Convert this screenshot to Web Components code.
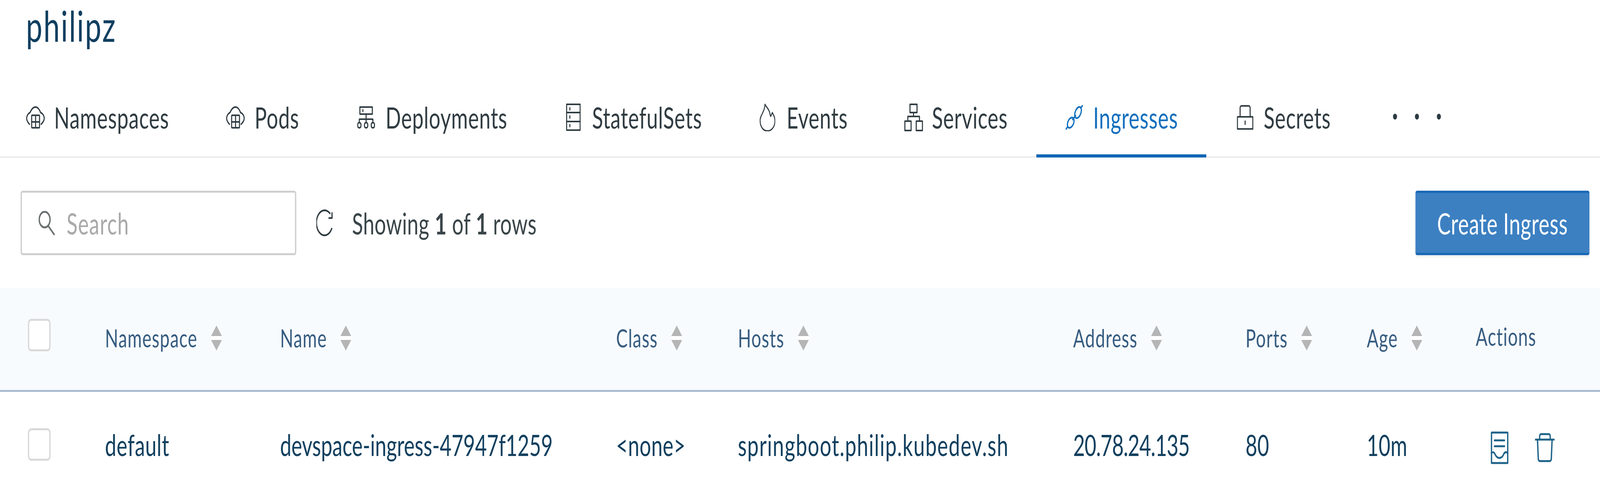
<!DOCTYPE html>
<html lang="en">
<head>
<meta charset="utf-8">
<title>philipz - Ingresses</title>
<style>
  html, body { margin: 0; background: #fff; overflow: hidden; }
  body { height: 1254px; font-family: Lato, "Open Sans", "Liberation Sans", sans-serif; }
</style>
</head>
<body>
<kube-page>
  <page-title slot="title">philipz</page-title>
  <kube-tabs slot="tabs">
    <kube-tab icon="pod" w="739" gap="34">Namespaces</kube-tab>
    <kube-tab icon="pod" w="485" gap="36">Pods</kube-tab>
    <kube-tab icon="deploy" w="772" gap="39">Deployments</kube-tab>
    <kube-tab icon="stateful" w="715" gap="42">StatefulSets</kube-tab>
    <kube-tab icon="flame" w="535" gap="42">Events</kube-tab>
    <kube-tab icon="service" w="596" gap="33">Services</kube-tab>
    <kube-tab icon="link" w="633" gap="38" active>Ingresses</kube-tab>
    <kube-tab icon="lock" w="577" gap="38">Secrets</kube-tab>
    <tab-more></tab-more>
  </kube-tabs>
  <kube-toolbar slot="toolbar"></kube-toolbar>
  <kube-table slot="table"></kube-table>
</kube-page>
<script>
// icon markup with its own viewBox size, traced from the reference
const ICONS = {
  pod: [70, 57, 4, '<path d="M13 46C5 40 1 33 3 28c1-5 6-10 12-12C20 8 27 2 35 2s15 6 19 14c7 2 12 7 13 12 2 5-2 12-11 18"/><rect x="21" y="23" width="29" height="32" rx="2"/><path d="M21 40h29M35.500 23v32"/>'],
  deploy: [66, 57, 4, '<rect x="10" y="2" width="46" height="18"/><path d="M21 9v4M33 20v13M8 42v-9h50v9M33 33v9"/><rect x="2" y="42" width="12" height="13" rx="5"/><rect x="27" y="42" width="12" height="13" rx="5"/><rect x="52" y="42" width="12" height="13" rx="5"/>'],
  stateful: [54, 70, 4, '<rect x="2" y="2" width="50" height="66"/><path d="M2 23h50M2 46h50M14 11v5M14 32v5M14 54v5"/>'],
  flame: [58, 71, 3.500, '<path d="M20 2c4 6 16 13 18 23 1 4 2 6 3 8 2-2 4-6 6-10 6 7 10 14 10 21 0 16-13 26-28 26S2 60 2 43C2 30 20 20 20 2z"/>'],
  service: [69, 71, 4, '<rect x="21" y="2" width="26" height="21"/><path d="M34 23v10M13 45V33h43v12"/><rect x="2" y="45" width="23" height="24"/><rect x="44" y="45" width="23" height="24"/>'],
  link: [64, 63, 4.500, '<ellipse cx="46" cy="19" rx="10" ry="16" transform="rotate(35 46 19)"/><ellipse cx="19" cy="45" rx="10" ry="15" transform="rotate(40 19 45)"/><path d="M63 1l-7 6M1 62l6-6M26 37l11-10"/>'],
  lock: [61, 63, 4, '<rect x="2" y="30" width="57" height="31"/><path d="M12 30V7a5 5 0 0 1 5-5h27a5 5 0 0 1 5 5v23M30.500 41v8"/>'],
  search: [61, 62, 5, '<circle cx="23" cy="22" r="20"/><path d="M36 38l22 22"/>'],
  refresh: [64, 69, 4.500, '<path d="M57 49A30 32 0 1 1 50 10"/><path d="M58 9v13H47"/>'],
  doc: [66, 84, 5, '<rect x="3" y="3" width="60" height="78" rx="1"/><path d="M14 23h37M14 38h37M3 55c6-3 9-2 12 2 5 8 11 11 17 11s13-3 17-11c3-4 7-5 14-2"/>'],
  trash: [74, 75, 5, '<path d="M3 17h68M18 17V8a5 5 0 0 1 5-5h29a5 5 0 0 1 5 5v9M10 17l3 50a6 6 0 0 0 6 5h36a6 6 0 0 0 6-5l3-50"/>']
};

function svgIcon(name) {
  const [w, h, sw, body] = ICONS[name];
  return `<svg xmlns="http://www.w3.org/2000/svg" width="${w}" height="${h}" viewBox="0 0 ${w} ${h}" fill="none" stroke="currentColor" stroke-width="${sw}" stroke-linecap="round" stroke-linejoin="round">${body}</svg>`;
}

class KubePage extends HTMLElement {
  constructor() {
    super();
    this.attachShadow({ mode: "open" }).innerHTML = `
      <style>
        :host { display: block; width: 5913px; height: 1254px; background: #fff; overflow: hidden; color: #12405f; transform-origin: 0 0; }
        .head { height: 196px; padding-left: 96px; box-sizing: border-box; }
      </style>
      <div class="head"><slot name="title"></slot></div>
      <slot name="tabs"></slot>
      <slot name="toolbar"></slot>
      <slot name="table"></slot>`;
  }
  connectedCallback() {
    // the browser window can be narrower than the 5913 design width, so squeeze it to fit
    const k = Math.min(1, window.innerWidth / 5913);
    this.style.transform = `scaleX(${k})`;
  }
}

class PageTitle extends HTMLElement {
  constructor() {
    super();
    this.attachShadow({ mode: "open" }).innerHTML = `
      <style>
        :host { display: block; font-size: 108px; line-height: 130px; letter-spacing: 4px; color: #0f3f60; padding-top: 0; }
      </style><slot></slot>`;
  }
}

class KubeTabs extends HTMLElement {
  constructor() {
    super();
    this.attachShadow({ mode: "open" }).innerHTML = `
      <style>
        :host { display: flex; height: 208px; box-sizing: border-box; border-bottom: 4px solid #ececec; padding-left: 96px; align-items: stretch; }
      </style><slot></slot>`;
  }
}

class KubeTab extends HTMLElement {
  constructor() {
    super();
    const active = this.hasAttribute("active");
    this.attachShadow({ mode: "open" }).innerHTML = `
      <style>
        :host { display: flex; flex: none; width: ${this.getAttribute("w")}px; box-sizing: border-box; position: relative; align-items: center; gap: ${this.getAttribute("gap")}px; color: ${active ? "#1570bd" : "#303c42"}; font-size: 75px; letter-spacing: 1.100px; padding-top: 4px; }
        svg { flex: none; }
        :host([active])::after { content: ""; position: absolute; left: -108px; right: 113px; bottom: -3px; height: 8px; background: #0f66b5; }
      </style>
      ${svgIcon(this.getAttribute("icon"))}<span><slot></slot></span>`;
  }
}

class TabMore extends HTMLElement {
  constructor() {
    super();
    this.attachShadow({ mode: "open" }).innerHTML = `
      <style>
        :host { display: flex; gap: 66px; align-items: center; padding: 0 0 0 0; }
        i { width: 15px; height: 15px; border-radius: 50%; background: #2c3a42; }
      </style><i></i><i></i><i></i>`;
  }
}

class KubeToolbar extends HTMLElement {
  constructor() {
    super();
    this.attachShadow({ mode: "open" }).innerHTML = `
      <style>
        :host { display: flex; align-items: center; height: 333px; box-sizing: border-box; padding: 0 39px 0 76px; }
        .search { width: 1019px; height: 165px; box-sizing: border-box; border: 5px solid #cfcfcf; border-radius: 8px; display: flex; align-items: center; gap: 43px; padding-left: 61px; color: #6a6f70; }
        .search span { color: #a9a9a9; font-size: 75px; letter-spacing: 1.800px; }
        .refresh { margin-left: 74px; color: #2f3b40; display: flex; }
        .status { margin-left: 68px; font-size: 75px; letter-spacing: 0.600px; color: #3a4549; }
        b { font-weight: 700; }
        button { margin-left: auto; width: 643px; height: 165px; background: #3c80c2; color: #fff; border: 0; border-top: 6px solid #1a69b6; border-bottom: 6px solid #1a69b6; border-radius: 6px; box-shadow: 0 6px 4px #f3f3f0; font: inherit; font-size: 75px; letter-spacing: 1px; padding: 0; }
      </style>
      <div class="search">${svgIcon("search")}<span>Search</span></div>
      <div class="refresh">${svgIcon("refresh")}</div>
      <div class="status">Showing <b>1</b> of <b>1</b> rows</div>
      <button>Create Ingress</button>`;
  }
}

class SortArrows extends HTMLElement {
  constructor() {
    super();
    this.attachShadow({ mode: "open" }).innerHTML = `
      <style>
        :host { display: inline-flex; flex-direction: column; margin-left: 50px; }
        i { display: block; width: 0; height: 0; border-left: 20px solid transparent; border-right: 20px solid transparent; }
        .u { border-bottom: 27px solid #b5b5b5; }
        .d { border-top: 27px solid #b5b5b5; }
        .m { height: 10px; background: #fff; }
      </style><i class="u"></i><div class="m"></div><i class="d"></i>`;
  }
}

class KubeTable extends HTMLElement {
  constructor() {
    super();
    const cols = "313px 647px 1242px 450px 1239px 637px 448px 403px 1fr";
    const head = [["Namespace", 1], ["Name", 1], ["Class", 1], ["Hosts", 1], ["Address", 1], ["Ports", 1], ["Age", 1], ["Actions", 0]];
    // letter spacing is per cell: the font is not the reference's, so the widths need nudging
    const cells = [["default", 1], ["devspace-ingress-47947f1259", 0], ["<none>", 0.6], ["springboot.philip.kubedev.sh", 2.200], ["20.78.24.135", -1.200], ["80", 0], ["10m", 0.400]];
    const esc = s => s.replace(/</g, "&lt;").replace(/>/g, "&gt;");
    this.attachShadow({ mode: "open" }).innerHTML = `
      <style>
        :host { display: block; }
        .row { display: grid; grid-template-columns: ${cols}; align-items: center; padding-left: 75px; box-sizing: border-box; }
        .hd { height: 266px; padding-bottom: 6px; background: #f8fbfe; border-bottom: 5px solid #a9bbd0; color: #365c80; font-size: 64px; letter-spacing: 1.800px; }
        .bd { height: 251px; padding-top: 18px; font-size: 75px; color: #12405f; }
        .box { width: 84px; height: 83px; margin-left: 28px; box-sizing: border-box; border: 5px solid #d9d9d9; border-radius: 12px; background: #fff; }
        .hd .box { margin-bottom: 14px; }
        .cell { display: flex; align-items: center; white-space: nowrap; }
        .hd .cell:last-child { padding-bottom: 9px; }
        .acts { display: flex; align-items: center; gap: 97px; color: #1f6389; padding-left: 55px; margin-top: 16px; }
      </style>
      <div class="row hd">
        <div class="box"></div>
        ${head.map(h => `<div class="cell">${h[0]}${h[1] ? "<sort-arrows></sort-arrows>" : ""}</div>`).join("")}
      </div>
      <div class="row bd">
        <div class="box"></div>
        ${cells.map(c => `<div class="cell" style="letter-spacing:${c[1]}px">${esc(c[0])}</div>`).join("")}
        <div class="acts">${svgIcon("doc")}${svgIcon("trash")}</div>
      </div>`;
  }
}

customElements.define("kube-page", KubePage);
customElements.define("page-title", PageTitle);
customElements.define("kube-tabs", KubeTabs);
customElements.define("kube-tab", KubeTab);
customElements.define("tab-more", TabMore);
customElements.define("kube-toolbar", KubeToolbar);
customElements.define("sort-arrows", SortArrows);
customElements.define("kube-table", KubeTable);
</script>
</body>
</html>
